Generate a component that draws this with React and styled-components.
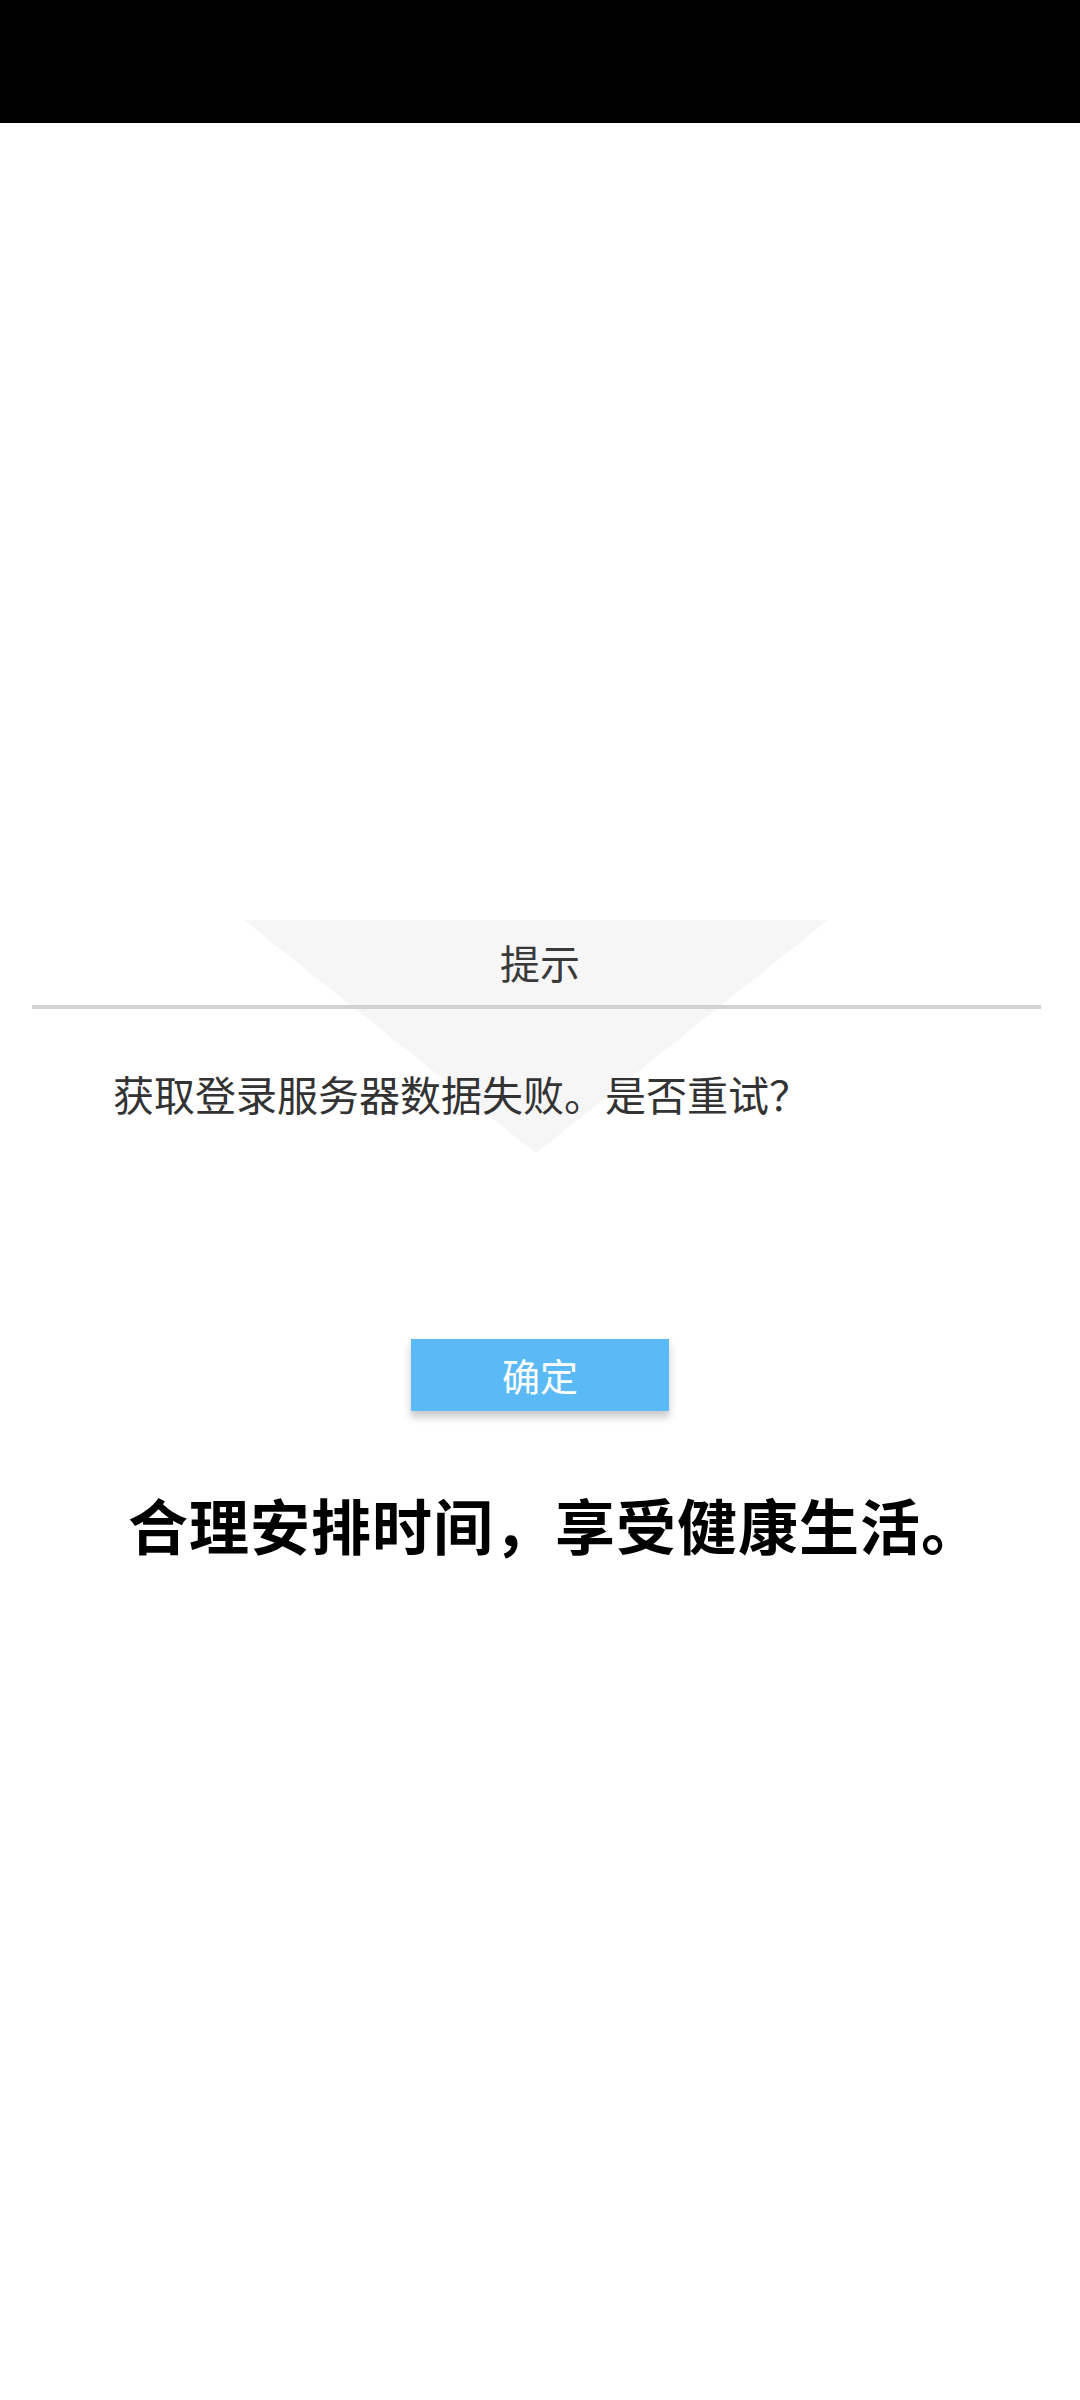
import React from 'react';
import styled, { createGlobalStyle } from 'styled-components';

const GlobalStyle = createGlobalStyle`
    html, body {
        margin: 0;
        padding: 0;
        background: #ffffff;
    }
    body {
        font-family: "Noto Sans CJK SC", "Noto Sans", sans-serif;
        color: #333333;
    }
`;

const Screen = styled.div`
    width: 1080px;
    min-height: 2400px;
    background: #ffffff;
    display: flex;
    flex-direction: column;
`;

const StatusBar = styled.div`
    height: 123px;
    background: #000000;
`;

const Dialog = styled.section`
    position: relative;
    margin-top: 797px;
    display: flex;
    flex-direction: column;
`;

// light triangle drawn behind the dialog text
const Backdrop = styled.svg`
    position: absolute;
    top: 0;
    left: 244px;
    width: 584px;
    height: 233px;
    z-index: 0;
`;

const Title = styled.h2`
    position: relative;
    z-index: 1;
    margin: 0;
    height: 85px;
    line-height: 85px;
    text-align: center;
    font-size: 40px;
    font-weight: 400;
    color: #3a3a3a;
`;

const Divider = styled.hr`
    position: relative;
    z-index: 1;
    margin: 0 39px 0 32px;
    height: 4px;
    border: none;
    background: #d3d3d3;
`;

const Message = styled.p`
    position: relative;
    z-index: 1;
    margin: 54px 0 0;
    padding-left: 113px;
    font-size: 41px;
    line-height: 60px;
    font-weight: 400;
    color: #333333;
`;

const Actions = styled.div`
    display: flex;
    justify-content: center;
    margin-top: 216px;
`;

const Button = styled.button`
    width: 258px;
    height: 72px;
    border: none;
    outline: none;
    background: #5bb9f5;
    color: #ffffff;
    font-family: "Noto Sans CJK SC", sans-serif;
    font-size: 38px;
    line-height: 72px;
    padding: 0;
    box-shadow: 0 6px 8px rgba(0, 0, 0, 0.22);
    cursor: pointer;
`;

const Slogan = styled.h1`
    margin: 73px 0 0;
    padding-left: 30px;
    text-align: center;
    font-size: 60px;
    line-height: 80px;
    font-weight: 700;
    letter-spacing: 1px;
    color: #000000;
`;

export default function App() {
    return (
        <Screen>
            <GlobalStyle />
            <StatusBar />
            <Dialog>
                <Backdrop viewBox="0 0 584 233" preserveAspectRatio="none">
                    <polygon points="0,0 584,0 292,233" fill="#f6f6f6" />
                </Backdrop>
                <Title>提示</Title>
                <Divider />
                <Message>获取登录服务器数据失败。是否重试？</Message>
            </Dialog>
            <Actions>
                <Button>确定</Button>
            </Actions>
            <Slogan>合理安排时间，享受健康生活。</Slogan>
        </Screen>
    );
}
